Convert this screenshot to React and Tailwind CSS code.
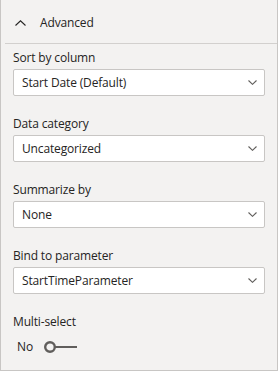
import React from "react";

function Chevron() {
  return (
    <svg width="9" height="5" viewBox="0 0 9 5" className="shrink-0">
      <path d="M0.5 0.5 L4.5 4.3 L8.5 0.5" fill="none" stroke="#605e5c" strokeWidth="1.1" />
    </svg>
  );
}

function Dropdown({ label, value }) {
  return (
    <div className="flex flex-col">
      <div className="h-[16px] leading-[16px] text-[12px] tracking-[-0.15px] text-[#252423]">{label}</div>
      <div className="mt-[3px] h-[27px] w-[252px] bg-white border border-[#c8c6c4] rounded-[2px] flex items-center justify-between pl-[8px] pr-[7px]">
        <span className="text-[12px] leading-[16px] tracking-[-0.15px] text-[#252423]">{value}</span>
        <Chevron />
      </div>
    </div>
  );
}

export default function App() {
  return (
    <div
      className="w-[278px] h-[371px] bg-[#f3f2f1] border-l border-r border-b border-[#c8c6c4] flex flex-col"
      style={{ fontFamily: '"Open Sans", "Noto Sans", sans-serif' }}
    >
      <div className="h-[43px] flex items-center pl-[14px] pt-[2px]">
        <svg width="11" height="6" viewBox="0 0 11 6" className="shrink-0">
          <path d="M0.5 5.5 L5.5 0.8 L10.5 5.5" fill="none" stroke="#252423" strokeWidth="1.1" />
        </svg>
        <span className="ml-[14px] text-[12px] leading-[16px] tracking-[-0.15px] text-[#252423]">Advanced</span>
      </div>
      <div className="ml-[4px] h-px bg-[#d2d0ce]" />
      <div className="pl-[12px] pt-[6px] flex flex-col gap-[20px]">
        <Dropdown label="Sort by column" value="Start Date (Default)" />
        <Dropdown label="Data category" value="Uncategorized" />
        <Dropdown label="Summarize by" value="None" />
        <Dropdown label="Bind to parameter" value="StartTimeParameter" />
        <div className="flex flex-col">
          <div className="h-[16px] leading-[16px] text-[12px] tracking-[-0.15px] text-[#252423]">Multi-select</div>
          <div className="mt-[9px] flex items-center pl-[4px] h-[16px]">
            <span className="text-[12px] leading-[16px] text-[#252423]">No</span>
            <svg width="36" height="14" viewBox="0 0 36 14" className="ml-[10px]">
              <circle cx="7" cy="7" r="4.8" fill="none" stroke="#605e5c" strokeWidth="2.4" />
              <line x1="11.5" y1="7" x2="34" y2="7" stroke="#605e5c" strokeWidth="2" />
            </svg>
          </div>
        </div>
      </div>
    </div>
  );
}
